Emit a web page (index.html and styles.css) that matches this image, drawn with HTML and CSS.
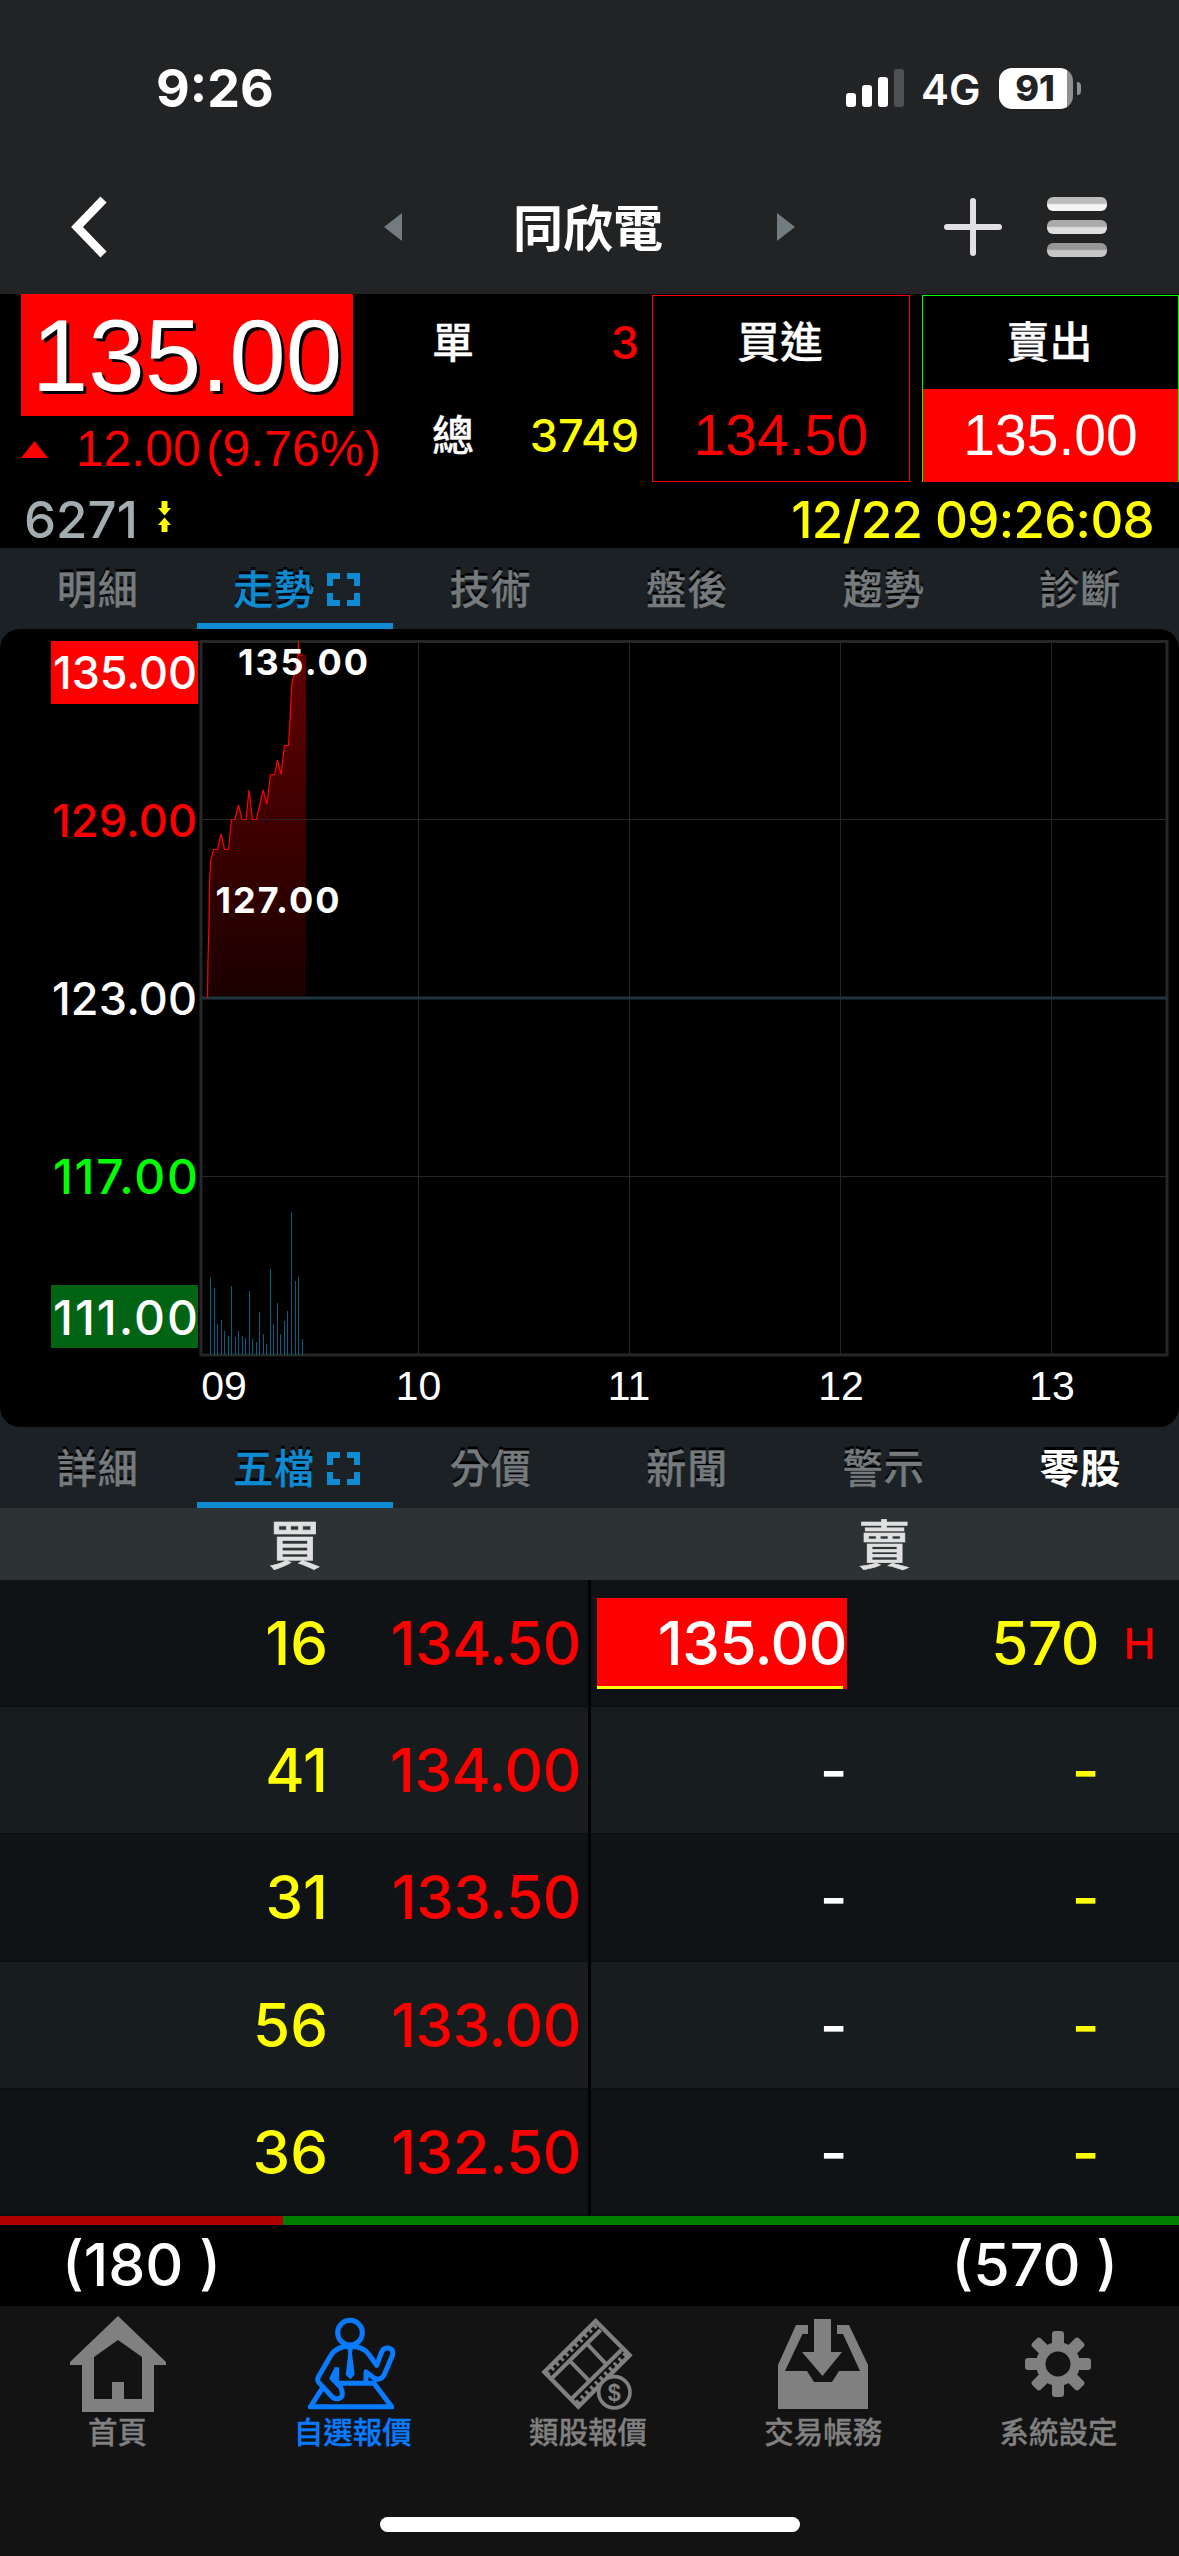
FILE: index.html
```html
<!DOCTYPE html>
<html lang="zh-Hant">
<head>
<meta charset="utf-8">
<title>同欣電 6271</title>
<link rel="stylesheet" href="styles.css">
</head>
<body>
<header class="top">
  <div class="status">
    <span class="clock">9:26</span>
    <div class="status-right">
      <svg class="signal" width="58" height="38" viewBox="0 0 58 38"><rect x="0" y="24" width="10" height="14" rx="3" fill="#fff"/><rect x="16" y="16" width="10" height="22" rx="3" fill="#fff"/><rect x="32" y="8" width="10" height="30" rx="3" fill="#fff"/><rect x="48" y="0" width="10" height="38" rx="3" fill="#505154"/></svg>
      <span class="net">4G</span>
      <div class="battery"><span>91</span></div>
      <i class="nub"></i>
    </div>
  </div>
  <nav class="titlebar">
    <svg class="back" width="40" height="62" viewBox="0 0 40 62"><path d="M34.5 3.5 8 31 34.5 58.5" fill="none" stroke="#fff" stroke-width="8.5"/></svg>
    <svg width="18" height="28" viewBox="0 0 18 28"><path d="M18 0V28L0 14Z" fill="#727b80"/></svg>
    <h1>同欣電</h1>
    <svg width="18" height="28" viewBox="0 0 18 28"><path d="M0 0V28L18 14Z" fill="#727b80"/></svg>
    <svg class="plus" width="58" height="58" viewBox="0 0 58 58"><path d="M3 29H55M29 3V55" stroke="#e1e1e3" stroke-width="6" stroke-linecap="round"/></svg>
    <div class="menu"><i class="m1"></i><i class="m2"></i><i class="m3"></i></div>
  </nav>
</header>

<section class="quote">
  <div class="quote-main">
    <div class="price-col">
      <div class="price">135.00</div>
      <div class="change"><svg width="27" height="17" viewBox="0 0 27 17"><path d="M13.5 0 27 17H0Z" fill="#f00"/></svg><span class="diff">12.00</span><span class="pct">(9.76%)</span></div>
    </div>
    <div class="volume">
      <div><span class="zh">單</span><b class="red">3</b></div>
      <div><span class="zh">總</span><b class="yellow">3749</b></div>
    </div>
    <div class="deal buy"><span>買進</span><strong>134.50</strong></div>
    <div class="deal sell"><span>賣出</span><strong>135.00</strong></div>
  </div>
  <div class="quote-foot">
    <span class="code">6271</span>
    <svg class="limits" width="13" height="31" viewBox="0 0 13 31"><path d="M3.500 0H9.500V7H13L6.500 14.500 0 7H3.500ZM3.500 31H9.500V24H13L6.500 16.500 0 24H3.500Z" fill="#ff0"/></svg>
    <span class="time">12/22 09:26:08</span>
  </div>
</section>

<nav class="tabs">
  <span>明細</span>
  <span class="active">走勢<svg width="33" height="33" viewBox="0 0 33 33"><path d="M3 13V3H13M20 3H30V13M30 20V30H20M13 30H3V20" fill="none" stroke="#0f8bd2" stroke-width="6"/></svg></span>
  <span>技術</span><span>盤後</span><span>趨勢</span><span>診斷</span>
</nav>

<section class="chart-wrap">
<svg class="chart" width="1179" height="798" viewBox="0 629 1179 798">
  <defs><linearGradient id="area" x1="0" y1="640" x2="0" y2="998" gradientUnits="userSpaceOnUse"><stop offset="0" stop-color="#640000"/><stop offset="1" stop-color="#1b0000"/></linearGradient></defs>
  <rect x="51" y="641" width="147" height="63" fill="#f00"/>
  <rect x="51" y="1285" width="147" height="63" fill="#006414"/>
  <g class="ylab">
    <text x="53" y="688.5" textLength="144" fill="#fff">135.00</text>
    <text x="52" y="836.5" textLength="145" fill="#f00">129.00</text>
    <text x="52" y="1015" textLength="145" fill="#fff">123.00</text>
    <text x="53" y="1194" textLength="145" class="tight" fill="#0f0">117.00</text>
    <text x="53" y="1334.500" textLength="145" class="tight" fill="#fff">111.00</text>
  </g>
  <path d="M207.5 998 209 922 210.500 862 213.500 849.500H217.500L221 834 224.500 849.500H228.500L231.500 819.500H235L238.500 805 242 819.500H246L249 790 252.500 819.500H256.500L263 790 267 804 270.500 774.500H274.500L277.500 760 281 774.500 284.500 745.500H288.500L290.500 710 292 682 295 672 298 655H306V998Z" fill="url(#area)"/>
  <path d="M201 819.500H1167M201 1176.500H1167M418.500 641V1356M629.500 641V1356M840.500 641V1356M1051.500 641V1356" stroke="#262626" stroke-width="1" fill="none"/>
  <rect x="201" y="641.500" width="966" height="713.500" fill="none" stroke="#262626" stroke-width="3"/>
  <path d="M201 998H1167" stroke="#1f3640" stroke-width="3"/>
  <path d="M207.500 998 208 960 209 922 209.500 884 210.500 862 213.500 849.500H217.500L221 834 224.500 849.500H228.500L231.500 819.500H235L238.500 805 242 819.500H246L249 790 252.500 819.500H256.500L263 790 267 804 270.500 774.500H274.500L277.500 760 281 774.500 284.500 745.500H288.500L290.500 710 292 682 295 672 298 655 298.500 641V655H303" fill="none" stroke="#f00" stroke-width="1.200"/>
  <path stroke="#00607f" stroke-width="1" d="M210.500 1278V1355M214.500 1288V1355M217.500 1324V1355M221.500 1320V1355M224.500 1331V1355M228.500 1336V1355M231.500 1286V1355M235.500 1337V1355M238.500 1331V1355M242.500 1336V1355M245.500 1338V1355M249.500 1291V1355M252.500 1339V1355M256.500 1342V1355M259.500 1312V1355M263.500 1334V1355M266.500 1344V1355M270.500 1269V1355M273.500 1324V1355M277.500 1303V1355M280.500 1334V1355M284.500 1321V1355M287.500 1311V1355M291.500 1212V1355M295.500 1281V1355M298.500 1277V1355M302.500 1339V1355"/>
  <g class="peak" fill="#fff"><text x="238" y="674.500" textLength="130">135.00</text><text x="215.500" y="912.500" textLength="124">127.00</text></g>
  <g class="xlab" fill="#fff"><text x="224" y="1400">09</text><text x="418.500" y="1400">10</text><text x="629" y="1400">11</text><text x="841" y="1400">12</text><text x="1052" y="1400">13</text></g>
</svg>
</section>

<nav class="tabs">
  <span>詳細</span>
  <span class="active">五檔<svg width="33" height="33" viewBox="0 0 33 33"><path d="M3 13V3H13M20 3H30V13M30 20V30H20M13 30H3V20" fill="none" stroke="#0f8bd2" stroke-width="6"/></svg></span>
  <span>分價</span><span>新聞</span><span>警示</span><span class="bright">零股</span>
</nav>

<section class="book">
  <div class="book-head"><span>買</span><span>賣</span></div>
  <div class="row"><b class="qty">16</b><b class="bid">134.50</b><b class="ask hit">135.00</b><b class="aqty">570</b><i class="flag">H</i></div>
  <div class="row"><b class="qty">41</b><b class="bid">134.00</b><b class="ask">-</b><b class="aqty">-</b></div>
  <div class="row"><b class="qty">31</b><b class="bid">133.50</b><b class="ask">-</b><b class="aqty">-</b></div>
  <div class="row"><b class="qty">56</b><b class="bid">133.00</b><b class="ask">-</b><b class="aqty">-</b></div>
  <div class="row"><b class="qty">36</b><b class="bid">132.50</b><b class="ask">-</b><b class="aqty">-</b></div>
  <div class="ratio"><i style="width:24%"></i></div>
  <div class="totals"><span>(180 )</span><span>(570 )</span></div>
</section>

<footer class="tabbar">
  <div class="items">
    <a><svg viewBox="0 0 96 96" width="96" height="96"><path fill="#808080" fill-rule="evenodd" d="M48 0 96 46V49H84V96H12V49H0V46ZM48 24 24 41V83H42V66H54V83H72V41Z"/></svg>首頁</a>
    <a class="on"><svg viewBox="15 18 288 288" width="96" height="96"><g fill="none" stroke="#0a7bff" stroke-width="15" stroke-linejoin="round"><ellipse cx="150" cy="68" rx="37" ry="37"/><path d="M150 109C118 109 102 119 91 139L55 201Q50 210 57 218L94 258Q105 270 118 265 130 260 126 244L122 232 96 205 110 176M110 172V220M150 109C183 109 199 121 208 135L230 166 244 128Q250 112 265 114 281 117 278 134L254 191Q247 207 232 208L222 204 198 186V216M108 220H222L275 290H32L68 233"/><path d="M24 291H282" stroke-width="11"/></g><path d="M140 108H160L156 130 164 194 151 208 137 194 145 130Z" fill="#0a7bff"/></svg>自選報價</a>
    <a><svg viewBox="18 18 288 288" width="96" height="96"><g fill="none" stroke="#808080"><path d="M185 33 287 136 133 290 31 186Z" stroke-width="13"/><path d="M200 60 54 204M262 120 113 266M157 99 217 163M106 151 168 215" stroke-width="12"/><path d="M185 44 39 189M277 133 129 281" stroke-width="18" stroke-dasharray="9 11"/></g><circle cx="241" cy="247" r="47" fill="#131313" stroke="#808080" stroke-width="11"/><text x="241" y="272" font-size="70" font-weight="700" font-family="Liberation Sans, sans-serif" text-anchor="middle" fill="#808080">$</text></svg>類股報價</a>
    <a><svg viewBox="776 2316 96 96" width="96" height="96"><path fill="#808080" d="M797 2325H809V2334H803.500L786 2371H808L815 2382H833L840 2371H861L844 2334H838V2325H850L869 2365V2409H779V2365ZM815 2319H832V2352H843L823.500 2376 803 2352H815Z"/></svg>交易帳務</a>
    <a><svg viewBox="-48 -48 96 96" width="96" height="96"><g fill="#808080"><rect x="-6" y="-33" width="12" height="66" rx="3"/><rect x="-33" y="-6" width="66" height="12" rx="3"/><g transform="rotate(45)"><rect x="-6" y="-33" width="12" height="66" rx="3"/><rect x="-33" y="-6" width="66" height="12" rx="3"/></g><circle r="22"/></g><circle r="12.500" fill="#131313"/></svg>系統設定</a>
  </div>
  <div class="home"></div>
</footer>
</body>
</html>
```
FILE: styles.css
```css
* { box-sizing: border-box; margin: 0; }
body {
  width: 1179px; height: 2556px; overflow: hidden; background: #000; color: #fff;
  font-family: Inter, "Noto Sans CJK TC", sans-serif;
  display: flex; flex-direction: column;
}
b, strong, i { font-weight: 550; font-style: normal; }
svg { display: block; flex: none; }
.red { color: #f00; }
.yellow { color: #ff0; }

/* status bar and title */
.top { height: 294px; background: #222325; }
.status { height: 160px; padding: 16px 98px 0 156px; display: flex; justify-content: space-between; align-items: center; }
.clock { font-size: 52px; font-weight: 700; letter-spacing: 0; }
.status-right { display: flex; align-items: center; }
.net { font-size: 42px; font-weight: 600; margin-left: 17px; width: 78px; padding-top: 2px; }
.battery {
  width: 74px; height: 41px; border-radius: 13px;
  background: linear-gradient(90deg, #fff 68px, #8f9092 68px);
  color: #222325; font-size: 36px; font-weight: 800; text-align: center; line-height: 41px; padding-right: 2px;
}
.nub { width: 4px; height: 13px; margin-left: 4px; background: #8f9092; border-radius: 0 4px 4px 0; }
.titlebar { height: 134px; padding-left: 69px; display: grid; align-items: center;
  grid-template-columns: 315px 18px 375px 18px 252px 60px; }
.titlebar h1 { font-size: 50px; font-weight: 700; text-align: center; line-height: 60px; padding: 3px 3px 0 0; }
.plus { justify-self: end; margin-right: 45px; }
.menu { display: flex; flex-direction: column; gap: 9px; }
.menu i { height: 14px; border-radius: 6px; }
.m1 { background: linear-gradient(#bcbcbc 45%, #f4f4f4 55%); }
.m2 { background: linear-gradient(#aaa 45%, #dedede 55%); }
.m3 { background: linear-gradient(#969696 45%, #c6c6c6 55%); }

/* quote */
.quote { height: 254px; }
.quote-main { height: 189px; display: grid; grid-template-columns: 432px 207px 13px 258px 12px 257px; }
.price-col { padding-left: 21px; grid-column: 1; }
.price { width: 332px; height: 122px; background: #f00; line-height: 124px; font-size: 101.500px; text-align: center; text-shadow: 3px 3px 0 #000; }
.price, .change, .deal strong { font-family: "Liberation Sans", Arial, sans-serif; font-weight: 400; }
.change { display: flex; align-items: center; color: #f00; font-size: 50px; line-height: 60px; height: 66px; }
.diff { margin-left: 28px; }
.pct { margin-left: 5px; }
.volume { grid-column: 2; }
.volume div { height: 93px; display: flex; justify-content: space-between; align-items: center; font-size: 42px; padding-top: 4px; }
.zh { line-height: 50px; font-weight: 500; -webkit-text-stroke: 0.3px; }
.volume b { font-size: 45px; }
.deal { margin-top: 1px; height: 187px; border: 1px solid #f00; display: flex; flex-direction: column; align-items: center; font-size: 43px; font-weight: 500; }
.deal span { -webkit-text-stroke: 0.3px; padding-right: 2px; }
.deal span, .deal strong { height: 93px; line-height: 93px; width: 100%; text-align: center; }
.deal strong { font-size: 57px; }
.buy { grid-column: 4; }
.buy strong { color: #f00; }
.sell { grid-column: 6; border-color: #0f0; }
.sell strong { background: #f00; }
.quote-foot { height: 65px; padding: 8px 25px 0 24px; display: flex; align-items: center; font-size: 51px; font-weight: 550; line-height: 56px; }
.code { color: #a3aeb2; width: 134px; }
.limits { margin-top: -6px; }
.time { margin-left: auto; color: #ff0; letter-spacing: -0.7px; }

/* tabs */
.tabs { height: 81px; background: #1b2124; display: grid; grid-template-columns: repeat(6, 1fr); }
.tabs span { display: flex; align-items: center; justify-content: center; font-size: 40px; font-weight: 500; line-height: 60px; padding: 8px 1px 0 0; letter-spacing: 1px; color: #757a7d; -webkit-text-stroke: 0.3px; text-shadow: 0 -3px 0 #000; border-bottom: 6px solid transparent; }
.tabs .active { color: #0f8bd2; border-color: #0f8bd2; gap: 12px; padding-left: 5px; }
.tabs .bright { color: #fff; font-weight: 600; -webkit-text-stroke: 0; }

/* chart */
.chart-wrap { height: 798px; background: #1b2124; }
.chart { background: #000; border-radius: 20px; }
.ylab { font-size: 45px; font-weight: 550; }
.ylab .tight { font-size: 48px; }
.peak { font-size: 36px; font-weight: 750; }
.xlab { font-family: "Liberation Sans", Arial, sans-serif; font-size: 41px; text-anchor: middle; }

/* order book */
.book { height: 798px; }
.book-head { height: 72px; background: #2d3235; color: #e0e0e0; display: grid; grid-template-columns: 1fr 1fr; text-align: center; font-size: 53px; font-weight: 500; line-height: 76px; -webkit-text-stroke: 0.6px; }
.row { height: 127.200px; display: grid; align-items: center; grid-template-columns: 328px 253px 16px 250px 252px 1fr; text-align: right; font-size: 60px; letter-spacing: -0.5px; line-height: 75px; padding-top: 1px; background: linear-gradient(#000, #000) 588px 0 / 3px 100% no-repeat #101315; border-bottom: 1px solid #0b0e0f; }
.row:nth-child(odd) { background-color: #171c1f; }
.qty, .aqty { color: #ff0; }
.qty { letter-spacing: 0; }
.bid { color: #f00; }
.ask { grid-column: 4; }
.hit { height: 91px; line-height: 91px; background: linear-gradient(#ff0, #ff0) 0 100% / 246px 3px no-repeat #f00; }
.flag { color: #f00; font-size: 43px; font-weight: 500; padding-right: 24px; }
.ratio { height: 9px; background: #008000; }
.ratio i { display: block; height: 9px; background: #b00000; }
.totals { height: 81px; padding: 0 61px 0 62px; display: flex; justify-content: space-between; font-size: 59px; font-weight: 550; line-height: 79px; }

/* bottom bar */
.tabbar { flex: 1; background: #131313; display: flex; flex-direction: column; align-items: center; justify-content: space-between; padding: 10px 0 24px; }
.items { width: 100%; padding-right: 3px; display: grid; grid-template-columns: repeat(5, 1fr); }
.items a { display: flex; flex-direction: column; align-items: center; color: #808080; font-size: 29.500px; font-weight: 500; line-height: 40px; -webkit-text-stroke: 0.3px; }
.items .on { color: #0a7bff; }
.home { width: 420px; height: 15px; border-radius: 8px; background: #fff; }
```
